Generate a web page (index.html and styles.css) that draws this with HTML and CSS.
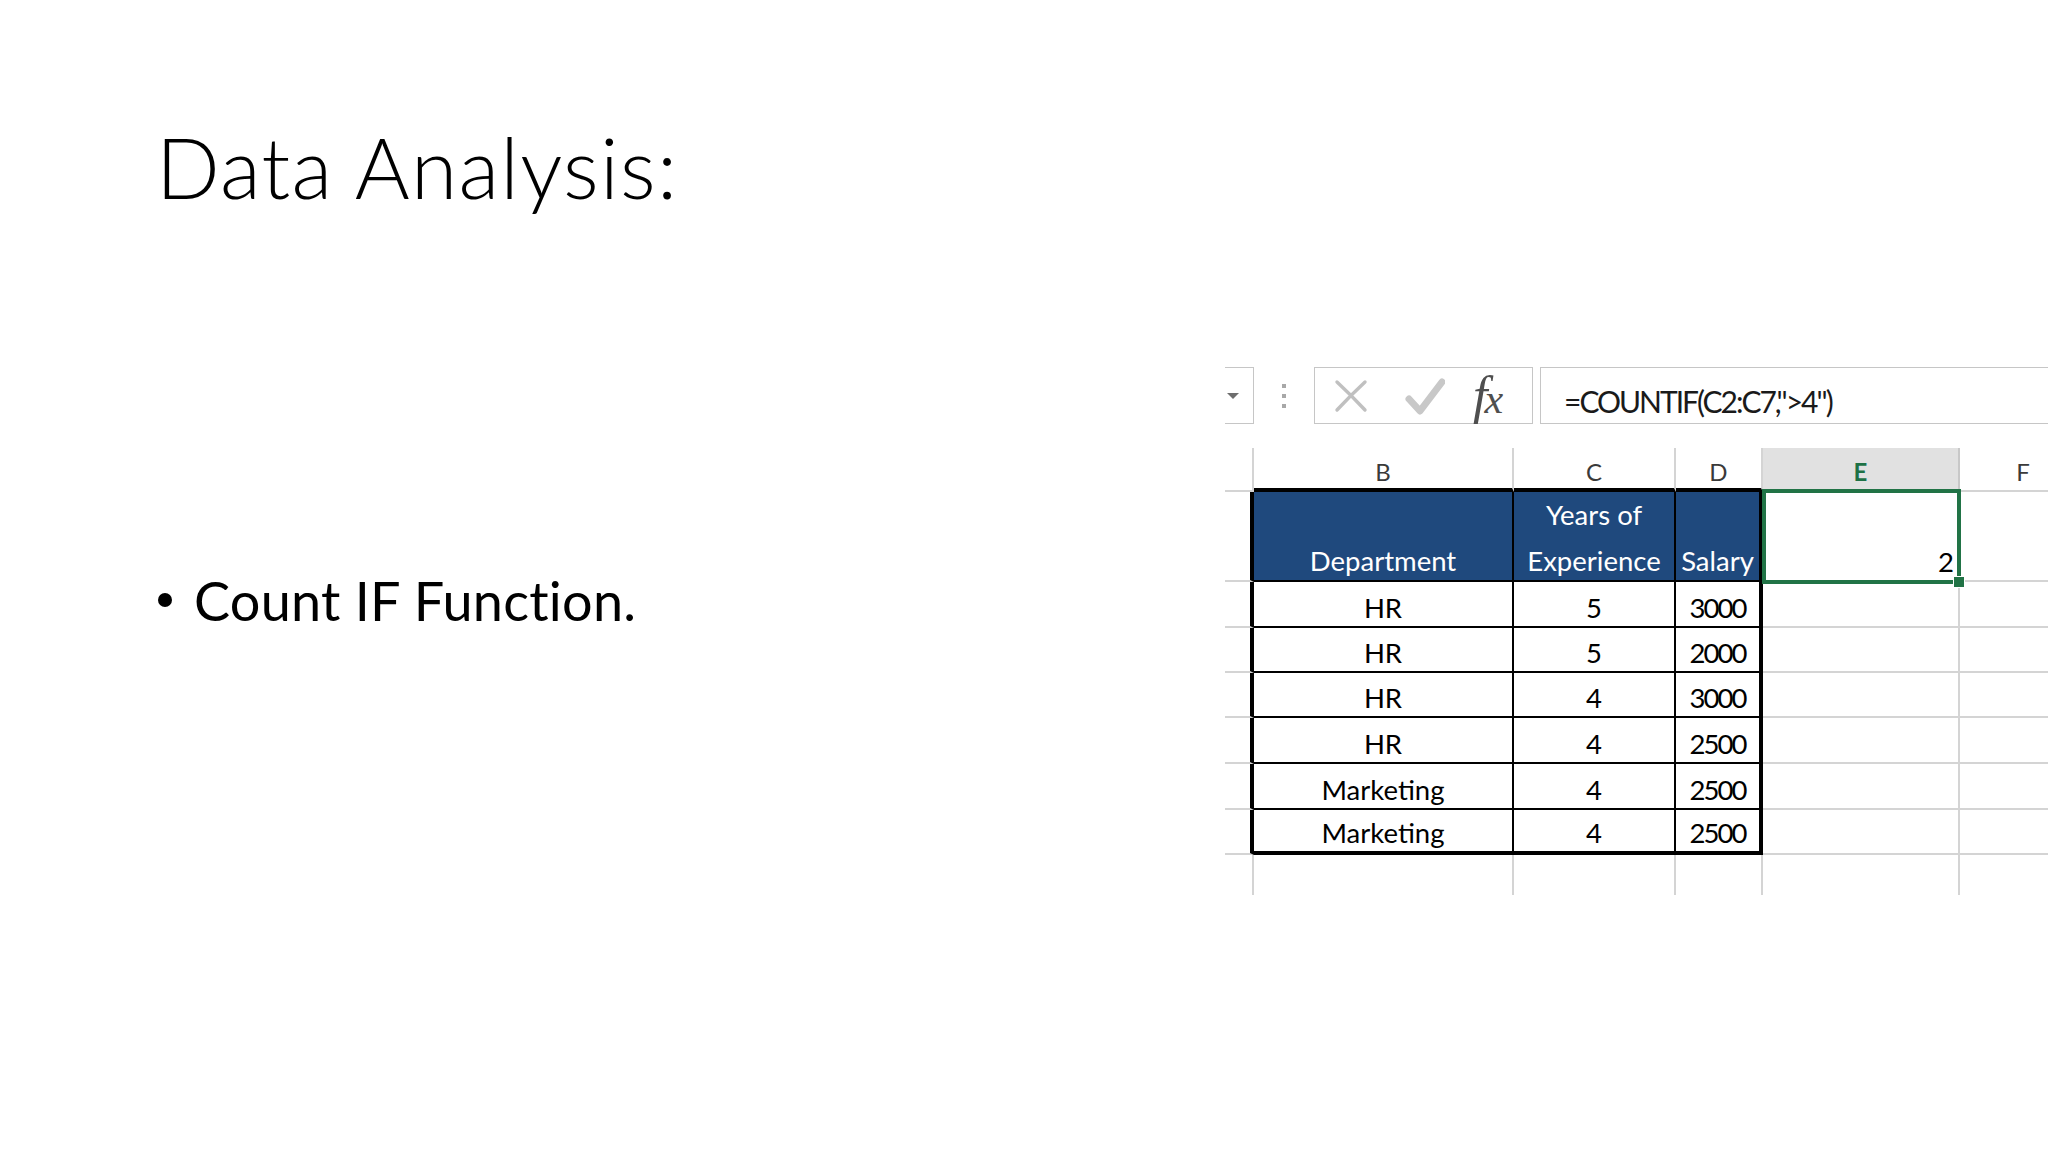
FILE: index.html
```html
<!DOCTYPE html>
<html lang="en">
<head>
<meta charset="utf-8">
<title>Data Analysis</title>
<link rel="stylesheet" href="styles.css">
</head>
<body>
<div class="slide">
  <h1 class="title">Data Analysis:</h1>
  <div class="content">
    <ul class="bullets">
      <li>Count IF Function.</li>
    </ul>
    <div class="excel">
      <div class="fbar">
        <div class="namebox"><span class="caret"></span></div>
        <div class="grip">
          <svg width="4" height="24" viewBox="0 0 4 24"><rect x="0" y="0" width="4" height="4" fill="#a8a8a8"/><rect x="0" y="10" width="4" height="4" fill="#a8a8a8"/><rect x="0" y="20" width="4" height="4" fill="#a8a8a8"/></svg>
        </div>
        <div class="fxbox">
          <svg class="ic-x" width="34" height="34" viewBox="0 0 34 34"><path d="M3 3 Q17 16 31 31 M31 3 Q17 16 3 31" fill="none" stroke="#c0c0c0" stroke-width="3.4" stroke-linecap="round"/></svg>
          <svg class="ic-check" width="40" height="38" viewBox="0 0 40 38"><path d="M4 21 L15 33 L37 4" fill="none" stroke="#c8c8c8" stroke-width="7" stroke-linecap="round" stroke-linejoin="round"/></svg>
          <span class="fx"><span class="fx-f">f</span><span class="fx-x">x</span></span>
        </div>
        <div class="finput">=COUNTIF(C2:C7,"&gt;4")</div>
      </div>
      <div class="sheet">
        <!-- column headers -->
        <div class="c ch rh0"></div>
        <div class="c ch ctop">B</div>
        <div class="c ch ctop">C</div>
        <div class="c ch ctop">D</div>
        <div class="c ch csel">E</div>
        <div class="c ch">F</div>
        <!-- row 1 -->
        <div class="c rh"></div>
        <div class="c t th"><div class="hd">Department</div></div>
        <div class="c t th"><div class="hd">Years of<br>Experience</div></div>
        <div class="c t th tr"><div class="hd">Salary</div></div>
        <div class="c ecell"><span class="val">2</span><div class="selection"><span class="handle"></span></div></div>
        <div class="c"></div>
        <!-- row 2 -->
        <div class="c rh"></div>
        <div class="c t">HR</div>
        <div class="c t">5</div>
        <div class="c t tr num">3000</div>
        <div class="c"></div>
        <div class="c"></div>
        <!-- row 3 -->
        <div class="c rh"></div>
        <div class="c t">HR</div>
        <div class="c t">5</div>
        <div class="c t tr num">2000</div>
        <div class="c"></div>
        <div class="c"></div>
        <!-- row 4 -->
        <div class="c rh"></div>
        <div class="c t">HR</div>
        <div class="c t">4</div>
        <div class="c t tr num">3000</div>
        <div class="c"></div>
        <div class="c"></div>
        <!-- row 5 -->
        <div class="c rh"></div>
        <div class="c t">HR</div>
        <div class="c t">4</div>
        <div class="c t tr num">2500</div>
        <div class="c"></div>
        <div class="c"></div>
        <!-- row 6 -->
        <div class="c rh"></div>
        <div class="c t">Marketing</div>
        <div class="c t">4</div>
        <div class="c t tr num">2500</div>
        <div class="c"></div>
        <div class="c"></div>
        <!-- row 7 -->
        <div class="c rh"></div>
        <div class="c t tb">Marketing</div>
        <div class="c t tb">4</div>
        <div class="c t tr tb num">2500</div>
        <div class="c"></div>
        <div class="c"></div>
        <!-- row 8 (empty) -->
        <div class="c nb"></div>
        <div class="c nb"></div>
        <div class="c nb"></div>
        <div class="c nb"></div>
        <div class="c nb"></div>
        <div class="c nb"></div>
      </div>
    </div>
  </div>
</div>
</body>
</html>
```

FILE: styles.css
```css
html, body {
  margin: 0;
  padding: 0;
}

body {
  width: 2048px;
  height: 1152px;
  background: #ffffff;
  overflow: hidden;
  font-family: Lato, "Open Sans", sans-serif;
  color: #000000;
}

.slide {
  width: 2048px;
  height: 1152px;
  display: flex;
  flex-direction: column;
}

.title {
  margin: 0;
  padding: 125px 0 0 156px;
  font-weight: 300;
  font-size: 84px;
  line-height: 84px;
  letter-spacing: 1.3px;
}

.content {
  display: flex;
  align-items: flex-start;
  margin-top: 158px;
}

.bullets {
  list-style: none;
  margin: 201px 0 0 0;
  padding: 0 0 0 158px;
}

.bullets li {
  display: flex;
  align-items: flex-start;
  font-size: 54px;
  line-height: 66px;
  letter-spacing: 0.25px;
}

.bullets li::before {
  content: "";
  flex: none;
  width: 14px;
  height: 14px;
  border-radius: 50%;
  background: #000000;
  margin: 25px 22px 0 0;
}

/* ---------- Excel screenshot ---------- */
.excel {
  margin-left: auto;
  width: 823px;
  overflow: hidden;
}

.fbar {
  display: flex;
  height: 57px;
  width: 823px;
}

.namebox {
  box-sizing: border-box;
  width: 29px;
  border: 1px solid #c6c6c6;
  border-left: none;
  display: flex;
  align-items: center;
}

.caret {
  margin-left: 2px;
  width: 0;
  height: 0;
  border-left: 6px solid transparent;
  border-right: 6px solid transparent;
  border-top: 6px solid #6e6e6e;
}

.grip {
  width: 60px;
  display: flex;
  align-items: center;
  justify-content: center;
}

.fxbox {
  box-sizing: border-box;
  width: 219px;
  border: 1px solid #c6c6c6;
  display: flex;
  align-items: center;
  padding-left: 19px;
}

.ic-x {
  margin-top: 1px;
}

.ic-check {
  margin-left: 37px;
  margin-top: 2px;
}

.fx {
  margin-left: 28px;
  font-family: "Liberation Serif", "DejaVu Serif", serif;
  font-style: italic;
  color: #4f4f4f;
  display: flex;
  align-items: baseline;
  line-height: 1;
}

.fx-f {
  font-size: 52px;
}

.fx-x {
  font-size: 42px;
  margin-left: -3px;
}

.finput {
  box-sizing: border-box;
  flex: 1;
  margin-left: 7px;
  border: 1px solid #c6c6c6;
  border-right: none;
  padding: 0 0 4px 23px;
  display: flex;
  align-items: flex-end;
  font-size: 30px;
  line-height: 36px;
  letter-spacing: -2px;
  color: #1a1a1a;
  white-space: nowrap;
}

.sheet {
  display: grid;
  grid-template-columns: 29px 260px 162px 87px 197px 128px;
  grid-template-rows: 44px 90px 46px 45px 45px 46px 46px 45px 40px;
  width: 863px;
  margin-top: 24px;
}

.c {
  box-sizing: border-box;
  display: flex;
  align-items: flex-end;
  justify-content: center;
  border-right: 2px solid #d4d4d4;
  border-bottom: 2px solid #d4d4d4;
  padding-bottom: 2px;
  font-size: 27.5px;
  line-height: 33px;
  white-space: nowrap;
  color: #000000;
}

.ch {
  align-items: flex-start;
  padding: 5px 0 0 0;
  font-size: 24px;
  line-height: 38px;
  color: #3a3a3a;
}

.ctop {
  border-bottom: 4px solid #000000;
}

.csel {
  background: #e1e1e1;
  color: #1e7145;
  font-weight: 700;
  border-right-color: #c8c8c8;
}

.rh {
  border-right: 4px solid #000000;
}

.t {
  border-right: 2px solid #000000;
  border-bottom: 2px solid #000000;
}

.tr {
  border-right: 4px solid #000000;
}

.tb {
  border-bottom: 4px solid #000000;
}

.th {
  background: #1f497d;
  color: #ffffff;
  padding-bottom: 0;
}

.hd {
  text-align: center;
  line-height: 46px;
  margin-bottom: -4px;
}

.num {
  letter-spacing: -2px;
}

.nb {
  border-bottom: none;
}

.ecell {
  position: relative;
  justify-content: flex-end;
  padding-right: 4px;
}

.val {
  letter-spacing: 0;
}

.selection {
  position: absolute;
  left: -1px;
  right: -3px;
  top: -3px;
  bottom: -4px;
  border: 4px solid #217346;
  pointer-events: none;
}

.handle {
  position: absolute;
  right: -8px;
  bottom: -8px;
  width: 10px;
  height: 10px;
  background: #217346;
  border: 1px solid #ffffff;
}
```
